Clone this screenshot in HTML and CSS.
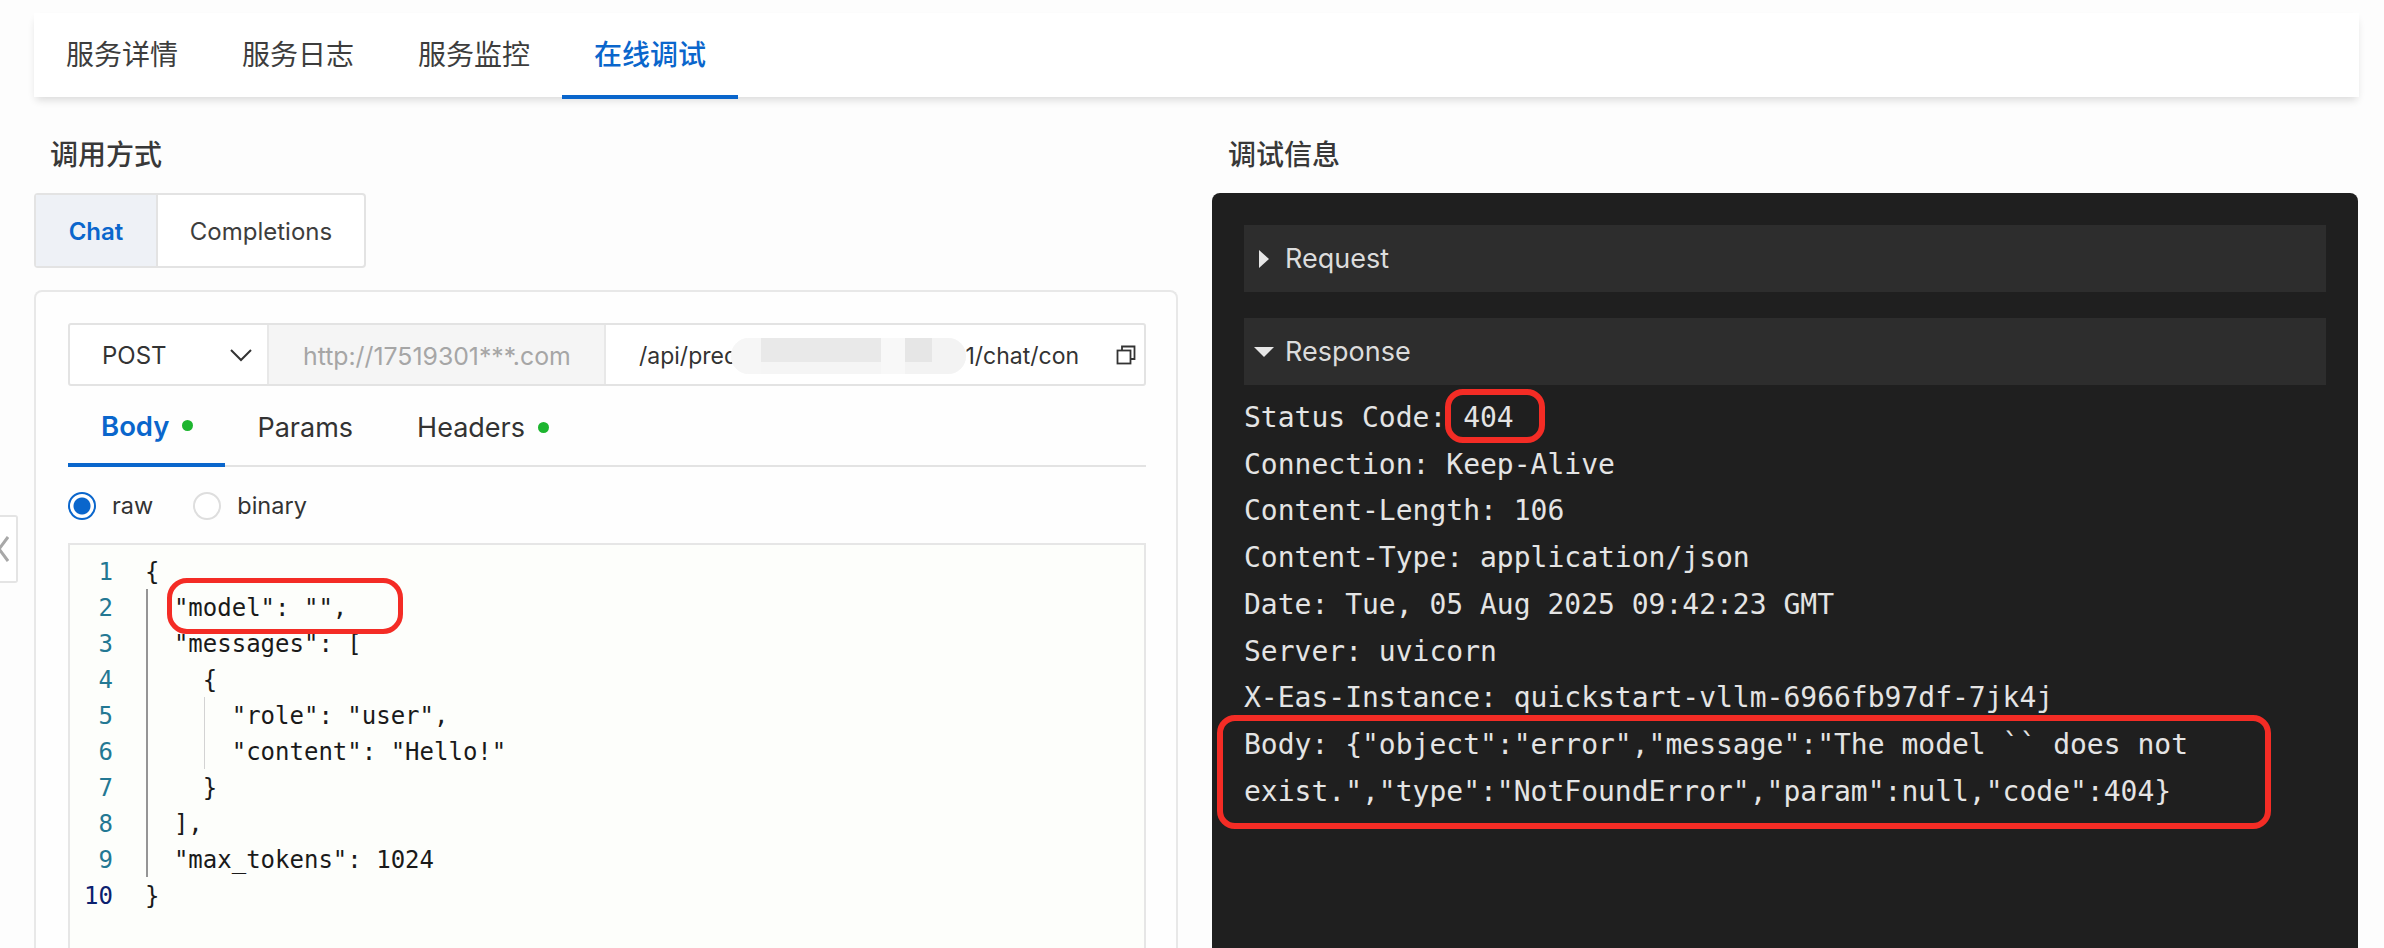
FILE: index.html
```html
<!DOCTYPE html>
<html lang="zh">
<head>
<meta charset="utf-8">
<title>在线调试</title>
<link rel="stylesheet" href="styles.css">
</head>
<body>
<div class="page">
  <nav class="main-tabs">
    <a class="main-tab">服务详情</a>
    <a class="main-tab">服务日志</a>
    <a class="main-tab">服务监控</a>
    <a class="main-tab active">在线调试</a>
  </nav>
  <div class="columns">
    <section class="left">
      <h2 class="heading">调用方式</h2>
      <div class="segmented">
        <div class="seg active">Chat</div>
        <div class="seg">Completions</div>
      </div>
      <div class="panel">
        <div class="url-row">
          <div class="method">POST
            <svg class="chev" width="24" height="14" viewBox="0 0 24 14"><path d="M2 2l10 10L22 2" fill="none" stroke="#333" stroke-width="2"/></svg>
          </div>
          <div class="host">http://17519301***.com</div>
          <div class="path">
            <span class="path-text">/api/predict/quickstart_vllm_/v1/chat/con</span>
            <svg class="copy" width="20" height="20" viewBox="0 0 20 20"><path d="M6 5V1.500h12.500V14H14.500" fill="none" stroke="#333" stroke-width="1.800"/><rect x="1.500" y="5.500" width="13" height="13" fill="none" stroke="#333" stroke-width="1.800"/></svg>
            <div class="blur"><i class="b1"></i><i class="b2"></i><i class="b3"></i><i class="b4"></i><i class="b5"></i></div>
          </div>
        </div>
        <div class="sub-tabs">
          <div class="sub-tab active">Body<span class="dot"></span></div>
          <div class="sub-tab">Params</div>
          <div class="sub-tab">Headers<span class="dot"></span></div>
        </div>
        <div class="radios">
          <span class="radio on"></span><span class="radio-label">raw</span>
          <span class="radio"></span><span class="radio-label">binary</span>
        </div>
        <div class="editor">
          <div class="gutter">
            <div>1</div><div>2</div><div>3</div><div>4</div><div>5</div><div>6</div><div>7</div><div>8</div><div>9</div><div class="cur">10</div>
          </div>
          <pre class="code">{
  "model": "",
  "messages": [
    {
      "role": "user",
      "content": "Hello!"
    }
  ],
  "max_tokens": 1024
}</pre>
          <span class="guide g1"></span>
          <span class="guide g2"></span>
          <span class="mark mark-model"></span>
        </div>
      </div>
    </section>
    <section class="right">
      <h2 class="heading">调试信息</h2>
      <div class="console">
        <div class="coll"><span class="tri-right"></span>Request</div>
        <div class="coll"><span class="tri-down"></span>Response</div>
        <div class="log">
          <div>Status Code: 404</div>
          <div>Connection: Keep-Alive</div>
          <div>Content-Length: 106</div>
          <div>Content-Type: application/json</div>
          <div>Date: Tue, 05 Aug 2025 09:42:23 GMT</div>
          <div>Server: uvicorn</div>
          <div>X-Eas-Instance: quickstart-vllm-6966fb97df-7jk4j</div>
          <div class="wrap">Body: {"object":"error","message":"The model `` does not exist.","type":"NotFoundError","param":null,"code":404}</div>
          <span class="mark mark-404"></span>
          <span class="mark mark-body"></span>
        </div>
      </div>
    </section>
  </div>
</div>
<div class="side-toggle"><svg class="side-chev" width="10" height="28" viewBox="0 0 10 28"><path d="M9 2L0 14l9 12" fill="none" stroke="#a8a8a8" stroke-width="3"/></svg></div>
</body>
</html>
```
FILE: styles.css
```css
* { box-sizing: border-box; }
html, body { margin: 0; padding: 0; height: 948px; overflow: hidden; background: #fdfdfd; }
body { font-family: Inter, "Noto Sans CJK SC", sans-serif; color: #333; position: relative; }
.page { padding: 13px 25px 0 34px; height: 948px; overflow: hidden; }

.main-tabs { display: flex; height: 84px; background: #fff; box-shadow: 0 5px 8px -2px rgba(0,0,0,.14); }
.main-tab { display: block; width: 176px; padding-top: 20px; text-align: center; font: 400 28px/40px "Noto Sans CJK SC", sans-serif; color: #3d3d3d; height: 86px; }
.main-tab.active { color: #0a66cc; font-weight: 500; border-bottom: 4px solid #0a66cc; }

.columns { display: grid; grid-template-columns: 1144px 1146px; column-gap: 34px; }
.heading { margin: 0; padding-top: 36px; height: 96px; font: 500 28px/40px "Noto Sans CJK SC", sans-serif; color: #383838; }
.left .heading { padding-left: 16px; }
.right .heading { padding-left: 16px; }

.segmented { display: flex; width: 332px; height: 75px; border: 2px solid #e3e3e3; border-radius: 4px; background: #fff; }
.seg { display: flex; align-items: center; justify-content: center; padding-top: 2px; font-size: 24px; color: #3d3d3d; flex: 1; }
.seg.active { flex: 0 0 122px; background: #eef1f6; color: #0a66cc; font-weight: 600; border-right: 2px solid #e3e3e3; }

.panel { margin-top: 22px; height: 658px; border: 2px solid #e8e8e8; border-bottom: 0; border-radius: 8px 8px 0 0; padding: 31px 30px 0 32px; background: #fefefe; }

.url-row { display: flex; height: 63px; border: 2px solid #e3e3e3; border-radius: 3px; background: #fff; font-size: 24px; }
.method { flex: 0 0 197px; display: flex; align-items: center; justify-content: space-between; padding: 2px 14px 0 32px; color: #333; }
.chev { margin-top: -2px; }
.host { flex: 0 0 339px; display: flex; align-items: center; padding: 2px 0 0 34px; background: #f5f5f5; color: #a6a6a6; border-left: 2px solid #e8e8e8; border-right: 2px solid #e8e8e8; white-space: nowrap; font-size: 24.800px; }
.path { position: relative; flex: 1; display: flex; align-items: center; padding: 2px 0 0 33px; color: #333; min-width: 0; font-size: 23px; }
.path-text { display: block; width: 442px; white-space: nowrap; }
.copy { margin-left: 35px; margin-top: -2px; flex: none; }
.blur { position: absolute; left: 125px; top: 13px; width: 235px; height: 36px; display: flex; overflow: hidden; border-radius: 18px; background: #f8f8f8; }
.blur i { display: block; height: 100%; }
.b1 { width: 30px; background: #f6f6f6; }
.b2 { width: 120px; background: linear-gradient(to bottom, #e9e9e9 66%, #f5f5f5 66%); }
.b3 { width: 24px; background: #f8f8f8; }
.b4 { width: 27px; background: linear-gradient(to bottom, #e6e6e6 66%, #f3f3f3 66%); }
.b5 { width: 34px; background: #f3f3f3; }

.sub-tabs { display: flex; height: 81px; border-bottom: 2px solid #e3e3e3; }
.sub-tab { display: flex; align-items: center; height: 81px; padding: 2px 32px 0; font-size: 27px; color: #333; }
.sub-tab.active { padding-left: 33px; font-size: 27.500px; color: #0a66cc; font-weight: 600; border-bottom: 4px solid #0a66cc; }
.dot { width: 11px; height: 11px; border-radius: 50%; background: #1db52f; margin-left: 13px; }

.radios { display: flex; align-items: center; height: 76px; padding-top: 1px; font-size: 23.500px; color: #333; }
.radio { width: 28px; height: 28px; border-radius: 50%; border: 2px solid #dedede; background: #fff; flex: none; }
.radio.on { border-color: #0a66cc; background: radial-gradient(circle, #0a66cc 0 8px, #fff 9px); }
.radio-label { margin: 0 40px 0 16px; }

.editor { position: relative; display: flex; height: 405px; border: 2px solid #e6e6e6; border-bottom: 0; background: #fdfefb; padding-top: 9px; font: 24px/36px "DejaVu Sans Mono", monospace; }
.gutter { width: 43px; text-align: right; color: #237893; flex: none; }
.gutter .cur { color: #0b216f; }
.code { margin: 0 0 0 32px; font: inherit; color: #1a1a1a; }
.guide { position: absolute; }
.g1 { left: 76px; top: 44px; width: 2px; height: 288px; background: #959595; }
.g2 { left: 134px; top: 152px; width: 1px; height: 72px; background: #d3d3d3; }

.mark { position: absolute; border: 5px solid #f42c25; }
.mark-model { left: 97px; top: 33px; width: 236px; height: 56px; border-radius: 20px; }

.console { height: 755px; padding: 32px 32px 0; background: #1f1f1f; border-radius: 8px 8px 0 0; width: 1146px; }
.coll { display: flex; align-items: center; height: 67px; margin-bottom: 26px; padding-left: 15px; background: #2d2d2d; color: #dcdcdc; font-size: 27px; width: 1082px; }
.coll:nth-child(2) { margin-bottom: 0; }
.tri-right { width: 0; height: 0; margin-right: 16px; border-style: solid; border-width: 9px 0 9px 10px; border-color: transparent transparent transparent #e6e6e6; }
.tri-down { width: 0; height: 0; margin: 0 11px 0 -5px; border-style: solid; border-width: 10px 10px 0; border-color: #e6e6e6 transparent transparent; }

.log { position: relative; padding-top: 10px; font: 28px/46.700px "DejaVu Sans Mono", monospace; color: #e4e4e4; }
.log > div { white-space: pre; }
.log > .wrap { white-space: normal; width: 1060px; }
.mark-404 { left: 201px; top: 4px; width: 100px; height: 54px; border-radius: 18px; border-width: 6px; }
.mark-body { left: -27px; top: 330px; width: 1054px; height: 114px; border-radius: 18px; border-width: 6px; }

.side-toggle { position: absolute; left: 0; top: 515px; width: 18px; height: 68px; border: 2px solid #e4e4e4; border-left: 0; border-radius: 0 3px 3px 0; background: #fff; display: flex; align-items: center; overflow: hidden; }
.side-chev { flex: none; margin-left: -1px; }
```
